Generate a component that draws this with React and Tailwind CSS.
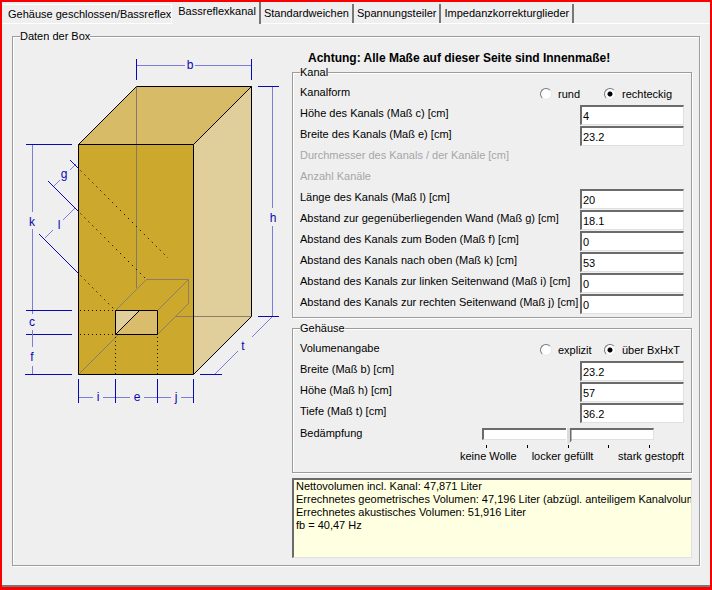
import React from 'react';

const TABS = [
  'Gehäuse geschlossen/Bassreflex',
  'Bassreflexkanal',
  'Standardweichen',
  'Spannungsteiler',
  'Impedanzkorrekturglieder',
];

const KANAL_FIELDS = [
  { id: 'c', label: 'Höhe des Kanals (Maß c) [cm]', value: '4' },
  { id: 'e', label: 'Breite des Kanals (Maß e) [cm]', value: '23.2' },
  { id: 'd', label: 'Durchmesser des Kanals / der Kanäle [cm]', disabled: true },
  { id: 'n', label: 'Anzahl Kanäle', disabled: true },
  { id: 'l', label: 'Länge des Kanals (Maß l) [cm]', value: '20' },
  { id: 'g', label: 'Abstand zur gegenüberliegenden Wand (Maß g) [cm]', value: '18.1' },
  { id: 'f', label: 'Abstand des Kanals zum Boden (Maß f) [cm]', value: '0' },
  { id: 'k', label: 'Abstand des Kanals nach oben (Maß k) [cm]', value: '53' },
  { id: 'i', label: 'Abstand des Kanals zur linken Seitenwand (Maß i) [cm]', value: '0' },
  { id: 'j', label: 'Abstand des Kanals zur rechten Seitenwand (Maß j) [cm]', value: '0' },
];

const BOX_FIELDS = [
  { id: 'b', label: 'Breite (Maß b) [cm]', value: '23.2' },
  { id: 'h', label: 'Höhe (Maß h) [cm]', value: '57' },
  { id: 't', label: 'Tiefe (Maß t) [cm]', value: '36.2' },
];

const RESULTS = `Nettovolumen incl. Kanal: 47,871 Liter
Errechnetes geometrisches Volumen: 47,196 Liter (abzügl. anteiligem Kanalvolumen)
Errechnetes akustisches Volumen: 51,916 Liter
fb = 40,47 Hz`;

function Group({ title, className = '', children }) {
  return (
    <fieldset className={`min-w-0 border border-[#9c9c9c] shadow-[1px_1px_0_#fff,inset_1px_1px_0_#fff] ${className}`}>
      <legend className="ml-[7px] leading-3">{title}</legend>
      {children}
    </fieldset>
  );
}

function Field({ id, label, value, disabled }) {
  return (
    <div className="flex h-[21px] items-start justify-between">
      {disabled ? (
        <span className="leading-4 text-[#a6a6a6]">{label}</span>
      ) : (
        <>
          <label htmlFor={id} className="leading-4 whitespace-nowrap">{label}</label>
          <input
            id={id}
            type="text"
            defaultValue={value}
            className="h-5 w-[104px] border-t-2 border-l-2 border-r border-b border-t-[#6b6b6b] border-l-[#6b6b6b] border-r-[#e0e0e0] border-b-[#e0e0e0] bg-white px-px outline-none"
          />
        </>
      )}
    </div>
  );
}

function RadioRow({ title, name, options }) {
  return (
    <div role="radiogroup" aria-label={title} className="flex h-[21px] items-start">
      <span className="flex-1 leading-4">{title}</span>
      <div className="flex w-36 items-center">
        {options.map((option, index) => (
          <label key={option} className="flex w-16 items-center gap-1.5 leading-5 whitespace-nowrap">
            <input
              type="radio"
              name={name}
              defaultChecked={index === 1}
              className="m-0 size-3 flex-none appearance-none rounded-full border border-t-[#777] border-l-[#777] border-r-[#e8e8e8] border-b-[#e8e8e8] bg-white checked:bg-[radial-gradient(circle,#000_0_2px,#fff_3px)]"
            />
            {option}
          </label>
        ))}
      </div>
    </div>
  );
}

function BoxDrawing() {
  return (
    <svg
      viewBox="13 42 279 368"
      className="h-[368px] w-[279px] flex-none"
      role="img"
      aria-label="Box mit Bassreflexkanal"
      fill="none"
    >
      <path d="M78.5 144.5L136.5 86.5H251.5L193.5 144.5Z" fill="#d7bb67" />
      <path d="M193.5 144.5L251.5 86.5V316.5L193.5 374.5Z" fill="#e1cf9b" />
      <path d="M78.5 144.5H193.5V374.5H78.5Z" fill="#cca82c" />
      <path d="M115.5 310.5H157.5V334.5H115.5Z" fill="#d9bd6c" />
      <path d="M115.5 310.5H139.5L115.5 334.5Z" fill="#e1cf9b" />

      <g stroke="#8d7d66">
        <path d="M251 316.5H176M78.5 374.5L118.5 334.5" />
        <path d="M115.5 310.5L146.5 279.5H188.5L157.5 310.5M188.5 279.5V303.5L157.5 334.5" />
      </g>
      <path d="M136.5 87V288" stroke="#857a68" />

      <g stroke="#000">
        <path d="M78.5 144.5L136.5 86.5H251.5V316.5L193.5 374.5M193.5 144.5L251.5 86.5" />
        <path d="M78.5 144.5H193.5V374.5H78.5Z" />
        <path d="M115.5 310.5H157.5V334.5H115.5ZM115.5 334.5L139.5 310.5" />
      </g>

      <g stroke="#1a1408" strokeDasharray="1 3">
        <path d="M80 310.5H115M80 334.5H115M115.5 337V374M157.5 337V374" />
      </g>
      <g stroke="#1a1408" strokeDasharray="1.4 4.2">
        <path d="M80.5 170.5L168 258M80.5 213.5L146.5 279.5M80.5 275.5L115.5 310.5" />
      </g>

      <g stroke="#0808b4">
        <path d="M136.5 59V80M251.5 59V80M258 86.5H279M258 316.5H279" />
        <path d="M26 144.5H72M26 310.5H72M26 334.5H72M25 374.5H72M200 374.5H222" />
        <path d="M78.5 379V403M115.5 379V403M157.5 379V403M193.5 379V403" />
        <path d="M70 160L79 169M48 181L78.5 211.5M39 234L78.5 273.5" />
      </g>

      <g stroke="#7c7cda">
        <path d="M137 65.5H185M195 65.5H251M272.5 87V208M272.5 226V316" />
        <path d="M32.5 145V212M32.5 229V310M32.5 311V314M32.5 330V347M32.5 366V374" />
        <path d="M79 397.5H93M103 397.5H115M116 397.5H130M144 397.5H157M158 397.5H171M181 397.5H193" />
        <path d="M215 374L238 351M252 337L272 317" />
        <path d="M76 164L70 170M60 180L54 186M75 208L63 220M53 230L45 238" />
      </g>

      <g fill="#0808b4" fontSize="12" textAnchor="middle">
        <text x="190" y="69">b</text>
        <text x="273" y="222">h</text>
        <text x="64" y="178">g</text>
        <text x="59" y="229">l</text>
        <text x="32" y="226">k</text>
        <text x="32" y="326">c</text>
        <text x="32" y="361">f</text>
        <text x="98" y="401">i</text>
        <text x="137" y="401">e</text>
        <text x="176" y="401">j</text>
        <text x="243" y="350">t</text>
      </g>
    </svg>
  );
}

function Damping() {
  return (
    <div className="flex justify-between">
      <label htmlFor="damping" className="leading-[18px]">Bedämpfung</label>
      <div className="w-56">
        <div className="mr-[30px] ml-[22px] pt-1">
          <input
            id="damping"
            type="range"
            min="0"
            max="4"
            defaultValue="2"
            className="block h-3 w-full appearance-none border-t-2 border-l-2 border-r border-b border-t-[#6b6b6b] border-l-[#6b6b6b] border-r-[#e0e0e0] border-b-[#e0e0e0] bg-white [&::-webkit-slider-thumb]:mt-[3px] [&::-webkit-slider-thumb]:h-4 [&::-webkit-slider-thumb]:w-[6px] [&::-webkit-slider-thumb]:appearance-none [&::-webkit-slider-thumb]:bg-[linear-gradient(to_right,#fff_1px,#dcdcdc_1px_4px,#6b6b6b_4px)] [&::-webkit-slider-thumb]:[clip-path:polygon(0_0,100%_0,100%_80%,50%_100%,0_80%)]"
          />
          <div className="mx-1 mt-[5px] flex justify-between">
            {[0, 1, 2, 3, 4].map((tick) => (
              <span key={tick} className="h-[3px] w-px bg-black" />
            ))}
          </div>
        </div>
        <div className="flex gap-[15px] leading-4 whitespace-nowrap">
          <span>keine Wolle</span>
          <span>locker gefüllt</span>
          <span className="ml-auto">stark gestopft</span>
        </div>
      </div>
    </div>
  );
}

export default function App() {
  return (
    <div className="min-h-[590px] border-2 border-b-[3px] border-[#fb0000] bg-[#efefef] font-['Liberation_Sans',Arial,sans-serif] text-[11px] text-black">
      <div className="border-b-2 border-[#777] pb-[19px]">
        <div role="tablist" className="flex h-[22px] items-end border-b border-white">
          {TABS.map((tab, index) => (
            <button
              key={tab}
              type="button"
              role="tab"
              aria-selected={index === 1}
              className={
                index === 0
                  ? 'h-[19px] border-t border-r border-white pl-[6px] whitespace-nowrap'
                  : index === 1
                    ? '-mb-px h-[22px] border-r-2 border-[#777] bg-[#efefef] pr-[3px] pb-1 pl-[6px] whitespace-nowrap'
                    : 'h-[19px] border-r-2 border-[#777] px-[3px] whitespace-nowrap'
              }
            >
              {tab}
            </button>
          ))}
        </div>

        <Group title="Daten der Box" className="mx-[10px] mt-[6px]">
          <div className="flex pb-[7px]">
            <BoxDrawing />
            <div className="min-w-0 flex-1 pt-2 pr-[7px]">
              <p className="pl-4 text-xs leading-4 font-bold whitespace-nowrap">
                Achtung: Alle Maße auf dieser Seite sind Innenmaße!
              </p>
              <Group title="Kanal">
                <div className="px-[7px] pt-[6px] pb-[2px]">
                  <RadioRow title="Kanalform" name="kanalform" options={['rund', 'rechteckig']} />
                  {KANAL_FIELDS.map((field) => (
                    <Field key={field.id} {...field} />
                  ))}
                </div>
              </Group>
              <Group title="Gehäuse" className="mt-1">
                <div className="px-[7px] pt-[6px] pb-2">
                  <RadioRow title="Volumenangabe" name="volumen" options={['explizit', 'über BxHxT']} />
                  {BOX_FIELDS.map((field) => (
                    <Field key={field.id} {...field} />
                  ))}
                  <Damping />
                </div>
              </Group>
              <textarea
                readOnly
                wrap="off"
                aria-label="Ergebnis"
                value={RESULTS}
                className="mt-[5px] block h-20 w-full resize-none overflow-hidden border-t-2 border-l-2 border-r border-b border-t-[#6b6b6b] border-l-[#6b6b6b] border-r-[#e0e0e0] border-b-[#e0e0e0] bg-[#ffffe1] px-[2px] leading-[13px] whitespace-pre outline-none"
              />
            </div>
          </div>
        </Group>
      </div>
    </div>
  );
}
